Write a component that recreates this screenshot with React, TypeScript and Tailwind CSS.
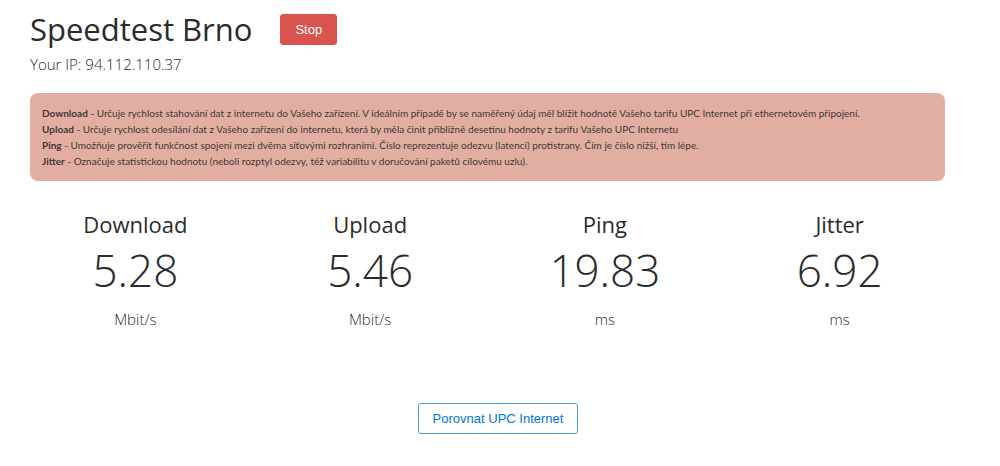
import clsx from 'clsx';

const descriptions = [
  {
    term: 'Download',
    text: 'Určuje rychlost stahování dat z internetu do Vašeho zařízení. V ideálním případě by se naměřený údaj měl blížit hodnotě Vašeho tarifu UPC Internet při ethernetovém připojení.',
  },
  {
    term: 'Upload',
    text: 'Určuje rychlost odesílání dat z Vašeho zařízení do internetu, která by měla činit přibližně desetinu hodnoty z tarifu Vašeho UPC Internetu',
  },
  {
    term: 'Ping',
    text: 'Umožňuje prověřit funkčnost spojení mezi dvěma síťovými rozhraními. Číslo reprezentuje odezvu (latenci) protistrany. Čím je číslo nižší, tím lépe.',
  },
  {
    term: 'Jitter',
    text: 'Označuje statistickou hodnotu (neboli rozptyl odezvy, též variabilitu v doručování paketů cílovému uzlu).',
  },
];

const results = [
  { name: 'Download', value: '5.28', unit: 'Mbit/s' },
  { name: 'Upload', value: '5.46', unit: 'Mbit/s' },
  { name: 'Ping', value: '19.83', unit: 'ms' },
  { name: 'Jitter', value: '6.92', unit: 'ms' },
];

const buttonBase = "rounded-[3px] border px-3.5 py-1 font-['Liberation_Sans',sans-serif] text-[13px] leading-[21px]";

export default function App() {
  return (
    <div className="min-h-screen bg-white pt-[7px] font-['Open_Sans',sans-serif] text-[#292b2c]">
      <main className="pr-[55px] pl-[30px]">
        <div className="flex items-center gap-7">
          <h1 className="text-[31px] leading-11">Speedtest Brno</h1>
          <button type="button" className={clsx(buttonBase, 'border-[#d9534f] bg-[#d9534f] text-white')}>
            Stop
          </button>
        </div>
        <p className="text-[15px] leading-[26px] font-light">Your IP: 94.112.110.37</p>

        <section className="mt-4 rounded-lg bg-[#e2aea2] p-3 font-['Lato',sans-serif] text-[10px] leading-4 text-[#433836]">
          {descriptions.map((item) => (
            <p key={item.term}>
              <strong className="font-bold">{item.term}</strong> - {item.text}
            </p>
          ))}
        </section>

        <section className="-mx-3 mt-[27px] grid grid-cols-4 text-center">
          {results.map((result) => (
            <div key={result.name}>
              <h2 className="text-[22px] leading-8">{result.name}</h2>
              <p className="text-[44px] leading-15 font-light">{result.value}</p>
              <p className="mt-[7px] text-[15px] leading-6 font-light">{result.unit}</p>
            </div>
          ))}
        </section>
      </main>

      <footer className="mt-18 flex justify-center pr-1">
        <button type="button" className={clsx(buttonBase, 'border-[#4d9de3] bg-white text-[#0275d8]')}>
          Porovnat UPC Internet
        </button>
      </footer>
    </div>
  );
}
